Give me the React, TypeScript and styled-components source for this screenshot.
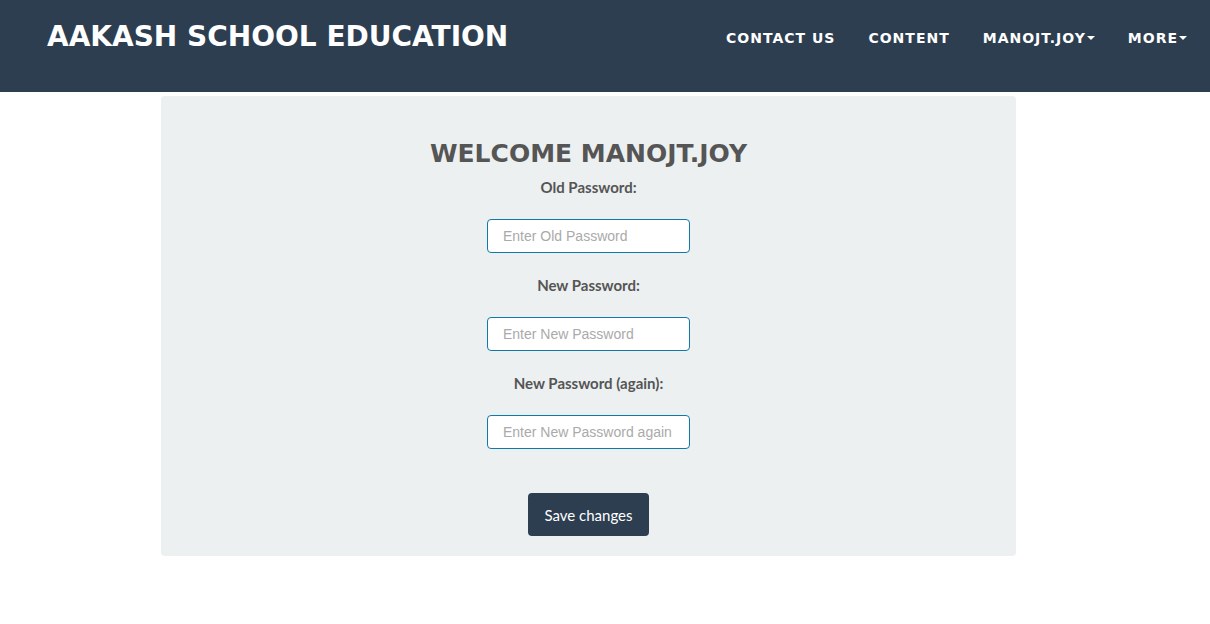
import React from "react";
import styled, { createGlobalStyle } from "styled-components";

const Global = createGlobalStyle`
  html, body { margin: 0; padding: 0; background: #ffffff; }
  body { font-family: Lato, "Liberation Sans", sans-serif; }
  * { box-sizing: border-box; }
`;

const Header = styled.header`
  height: 92px;
  background: #2c3e50;
  display: flex;
  justify-content: space-between;
  align-items: flex-start;
  padding: 0 23px 0 47px;
`;

const Brand = styled.div`
  font-family: "DejaVu Sans", sans-serif;
  font-weight: bold;
  font-size: 28px;
  color: #ffffff;
  margin-top: 20px;
  letter-spacing: 0;
`;

const Nav = styled.nav`
  display: flex;
  gap: 33px;
  margin-top: 30px;
`;

const NavItem = styled.a`
  font-family: "DejaVu Sans", sans-serif;
  font-weight: bold;
  font-size: 14px;
  letter-spacing: 1px;
  color: #ffffff;
  text-decoration: none;
  display: flex;
  align-items: center;
`;

const Caret = styled.span`
  display: inline-block;
  width: 0;
  height: 0;
  margin-left: 1px;
  border-top: 4px solid #ffffff;
  border-left: 4px solid transparent;
  border-right: 4px solid transparent;
`;

const Panel = styled.div`
  margin: 4px 0 0 161px;
  width: 855px;
  background: #ecf0f1;
  border-radius: 4px;
  padding: 43px 0 20px;
  display: flex;
  flex-direction: column;
  align-items: center;
`;

const Title = styled.h2`
  margin: 0 0 9px;
  font-family: "DejaVu Sans", sans-serif;
  font-weight: bold;
  font-size: 25px;
  color: #555555;
`;

const Label = styled.label`
  font-family: Lato, sans-serif;
  font-weight: bold;
  font-size: 15px;
  color: #555555;
  line-height: 20px;
  margin-bottom: 22px;
`;

const Input = styled.input<{ $mb: number }>`
  width: 203px;
  height: 34px;
  border: 1px solid #0f7aa8;
  border-radius: 4px;
  background: #ffffff;
  padding: 0 15px;
  font-family: "Liberation Sans", Arial, sans-serif;
  font-size: 14px;
  color: #555;
  margin-bottom: ${(p) => p.$mb}px;
  outline: none;
  &::placeholder { color: #aaaaaa; }
`;

const Button = styled.button`
  width: 121px;
  height: 43px;
  background: #2c3e50;
  color: #ffffff;
  border: none;
  border-radius: 4px;
  font-family: Lato, sans-serif;
  font-size: 15px;
`;

export default function App() {
  return (
    <>
      <Global />
      <Header>
        <Brand>AAKASH SCHOOL EDUCATION</Brand>
        <Nav>
          <NavItem>CONTACT US</NavItem>
          <NavItem>CONTENT</NavItem>
          <NavItem>MANOJT.JOY<Caret /></NavItem>
          <NavItem>MORE<Caret /></NavItem>
        </Nav>
      </Header>
      <Panel>
        <Title>WELCOME MANOJT.JOY</Title>
        <Label>Old Password:</Label>
        <Input $mb={22} type="password" placeholder="Enter Old Password" />
        <Label>New Password:</Label>
        <Input $mb={22} type="password" placeholder="Enter New Password" />
        <Label>New Password (again):</Label>
        <Input $mb={44} type="password" placeholder="Enter New Password again" />
        <Button>Save changes</Button>
      </Panel>
    </>
  );
}
